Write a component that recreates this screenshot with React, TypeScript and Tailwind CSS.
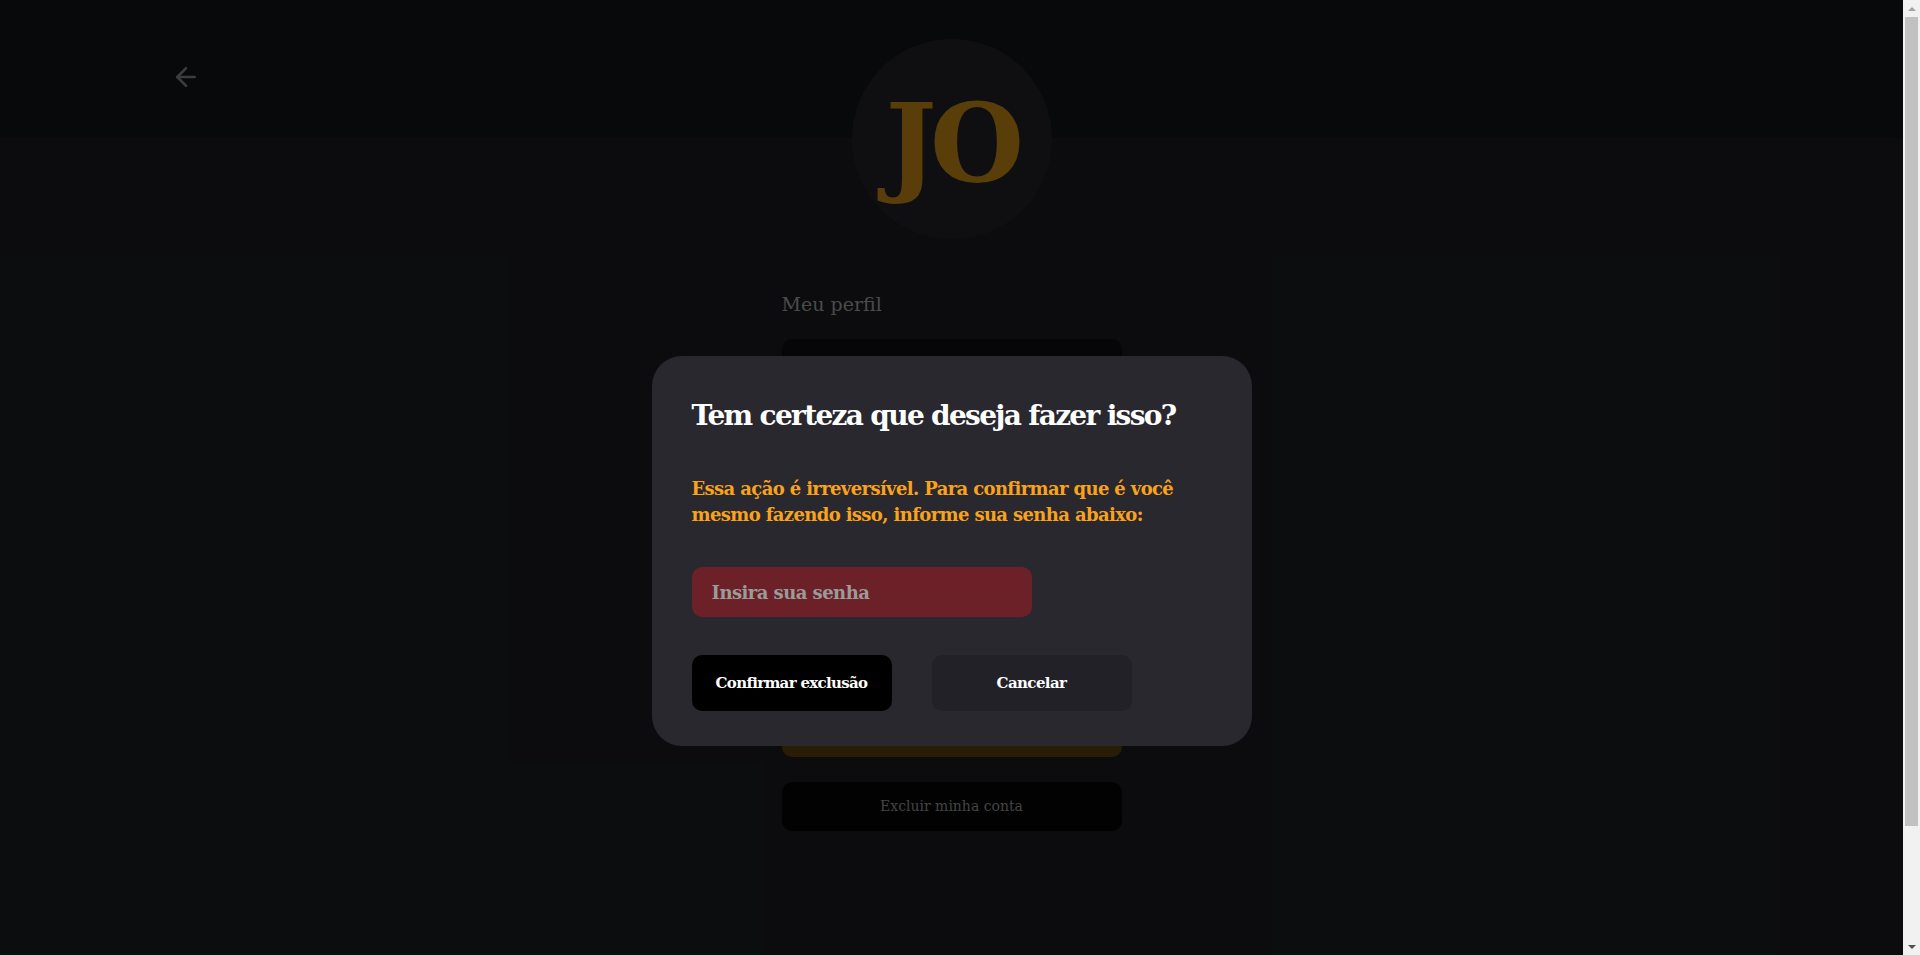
import { ArrowLeft } from 'lucide-react';

const fields = ['João Oliveira', 'joao@email.com', '(11) 98765-4321', 'Nova senha', 'Confirmar nova senha'];

function Scrollbar() {
  return (
    <aside className="w-[17px] shrink-0 bg-[#f1f1f1] flex flex-col items-center">
      <div className="h-[17px] w-full flex items-center justify-center">
        <span className="w-0 h-0 border-l-[4px] border-r-[4px] border-b-[4px] border-l-transparent border-r-transparent border-b-[#a3a3a3]" />
      </div>
      <div className="w-[13px] h-[809px] bg-[#c1c1c1]" />
      <div className="flex-1" />
      <div className="h-[17px] w-full flex items-center justify-center">
        <span className="w-0 h-0 border-l-[4px] border-r-[4px] border-t-[4px] border-l-transparent border-r-transparent border-t-[#505050]" />
      </div>
    </aside>
  );
}

export default function App() {
  return (
    <div className="h-[955px] overflow-hidden flex font-['DejaVu_Serif',serif] text-white">
      <div className="relative flex-1 min-w-0 bg-[#18191e]">
        {/* Header */}
        <header className="h-[138px] bg-[#111216] flex items-start pl-[171px] pt-[62px]">
          <button className="text-[#787878]">
            <ArrowLeft size={30} strokeWidth={2} />
          </button>
        </header>

        <main className="flex flex-col items-center">
          {/* Avatar */}
          <div className="-mt-[99px] w-[200px] h-[200px] rounded-full bg-[#1e1f25] flex items-center justify-center pt-[8px]">
            <span className="text-[108px] font-bold leading-none tracking-[-0.06em] text-[#b47c14]">JO</span>
          </div>

          <div className="w-[340px] mt-[53px]">
            <h2 className="text-[19px] leading-[24px] text-[#949494]">Meu perfil</h2>

            <div className="mt-[23px] flex flex-col gap-4">
              {fields.map((f) => (
                <div key={f} className="h-[50px] rounded-[10px] bg-[#0c0c10] px-5 flex items-center text-[16px] text-[#777]">
                  {f}
                </div>
              ))}
            </div>

            <button className="mt-[54px] w-full h-[50px] rounded-[10px] bg-[#543a0c] text-[16px] font-bold text-[#222]">
              Salvar alterações
            </button>

            <button className="mt-[25px] w-full h-[49px] rounded-[10px] bg-[#040405] text-[14px] text-[#888]">
              Excluir minha conta
            </button>
          </div>
        </main>

        {/* Modal overlay */}
        <div className="absolute inset-0 bg-black/50 flex justify-center items-start pt-[356px]">
          <div className="w-[600px] rounded-[30px] bg-[#29282f] px-10 pt-10 pb-[35px]">
            <h1 className="text-[28px] font-bold leading-[40px] tracking-[-0.06em] whitespace-nowrap">
              Tem certeza que deseja fazer isso?
            </h1>
            <p className="mt-10 text-[18px] font-bold leading-[25.5px] tracking-[-0.035em] text-[#f9a21b] whitespace-nowrap">
              Essa ação é irreversível. Para confirmar que é você
              <br />
              mesmo fazendo isso, informe sua senha abaixo:
            </p>
            <input
              type="password"
              placeholder="Insira sua senha"
              className="mt-10 block w-[340px] h-[50px] rounded-[10px] bg-[#6b2127] px-5 text-[18px] font-bold tracking-[-0.03em] text-white placeholder:text-[#9b9b9b] outline-none"
            />
            <div className="mt-[38px] flex gap-10">
              <button className="w-[200px] h-[56px] rounded-[10px] bg-black text-[15px] font-bold tracking-[-0.045em]">
                Confirmar exclusão
              </button>
              <button className="w-[200px] h-[56px] rounded-[10px] bg-[#222128] text-[15px] font-bold tracking-[-0.04em]">
                Cancelar
              </button>
            </div>
          </div>
        </div>
      </div>
      <Scrollbar />
    </div>
  );
}
